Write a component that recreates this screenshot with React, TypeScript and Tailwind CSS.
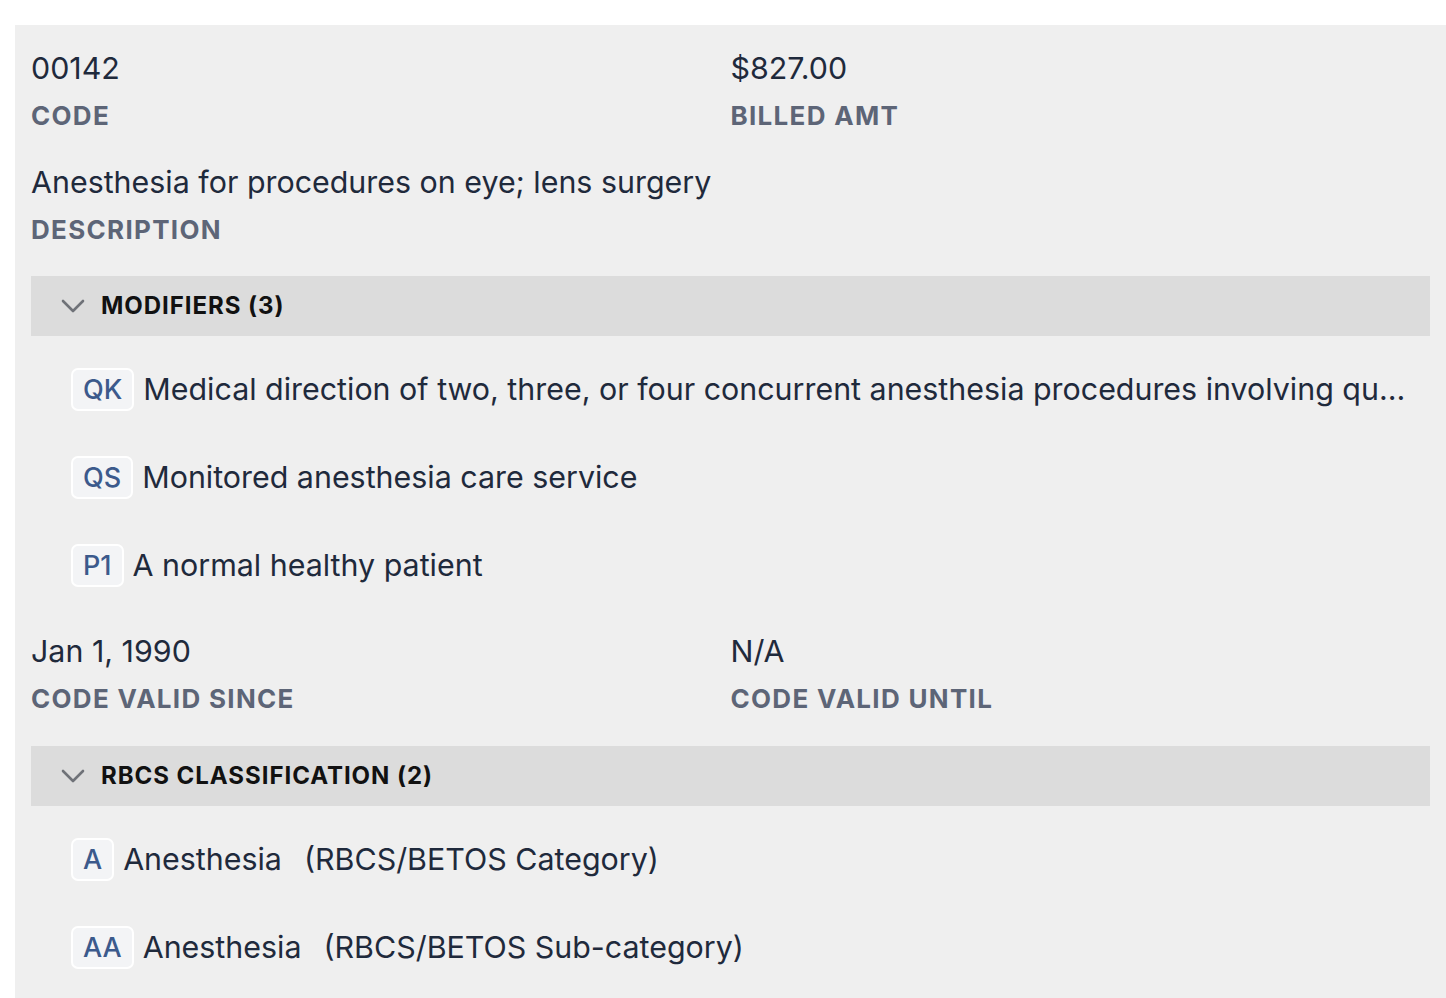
type Field = { value: string; label: string };

type Entry = { code: string; text: string; note?: string };

const modifiers: Entry[] = [
  {
    code: "QK",
    text: "Medical direction of two, three, or four concurrent anesthesia procedures involving qualified individuals",
  },
  { code: "QS", text: "Monitored anesthesia care service" },
  { code: "P1", text: "A normal healthy patient" },
];

const rbcs: Entry[] = [
  { code: "A", text: "Anesthesia", note: "(RBCS/BETOS Category)" },
  { code: "AA", text: "Anesthesia", note: "(RBCS/BETOS Sub-category)" },
];

function FieldBlock({ value, label }: Field) {
  return (
    <div className="flex flex-col">
      <div className="flex h-[48px] items-center text-[30.4px] leading-none text-[#1f2a3c]">{value}</div>
      <div className="flex h-[48px] items-center text-[26px] font-bold leading-none tracking-[0.05em] text-[#5d6577]">
        {label}
      </div>
    </div>
  );
}

function Chevron() {
  return (
    <svg width="24" height="14" viewBox="0 0 24 14" fill="none" className="shrink-0">
      <polyline
        points="2,2 12,12 22,2"
        stroke="#6f7278"
        strokeWidth="2.6"
        strokeLinecap="round"
        strokeLinejoin="round"
      />
    </svg>
  );
}

function SectionHeader({ title }: { title: string }) {
  return (
    <div className="flex h-[60px] items-center bg-[#dcdcdc] pl-[30px]">
      <Chevron />
      <span className="ml-[16px] text-[24px] font-bold leading-none tracking-[0.04em] text-[#111111]">{title}</span>
    </div>
  );
}

function EntryRow({ code, text, note }: Entry) {
  return (
    <div className="flex h-[88px] items-center pl-[40px] pr-[22px]">
      <span className="flex h-[43px] shrink-0 items-center rounded-[7px] border-2 border-white bg-[#f3f4f6] px-[10px] text-[27px] font-medium leading-none text-[#3c5a8c]">
        {code}
      </span>
      <span className="ml-[9px] truncate text-[30.4px] leading-[44px] text-[#1f2a3c]">
        {text}
        {note && <span className="ml-[22px]">{note}</span>}
      </span>
    </div>
  );
}

export default function App() {
  return (
    <div className="min-h-screen bg-white pl-[15px] pt-[25px] font-['Inter',sans-serif]">
      <div className="w-[1431px] bg-[#efefef] px-[16px] pb-[8px] pt-[19px]">
        <div className="grid grid-cols-2">
          <FieldBlock value="00142" label="CODE" />
          <FieldBlock value="$827.00" label="BILLED AMT" />
        </div>
        <div className="mt-[18px]">
          <FieldBlock value="Anesthesia for procedures on eye; lens surgery" label="DESCRIPTION" />
        </div>

        <div className="mt-[22px]">
          <SectionHeader title="MODIFIERS (3)" />
          <div className="mt-[9px]">
            {modifiers.map((m) => (
              <EntryRow key={m.code} {...m} />
            ))}
          </div>
        </div>

        <div className="mt-[18px] grid grid-cols-2">
          <FieldBlock value="Jan 1, 1990" label="CODE VALID SINCE" />
          <FieldBlock value="N/A" label="CODE VALID UNTIL" />
        </div>

        <div className="mt-[23px]">
          <SectionHeader title="RBCS CLASSIFICATION (2)" />
          <div className="mt-[9px]">
            {rbcs.map((r) => (
              <EntryRow key={r.code} {...r} />
            ))}
          </div>
        </div>
      </div>
    </div>
  );
}
